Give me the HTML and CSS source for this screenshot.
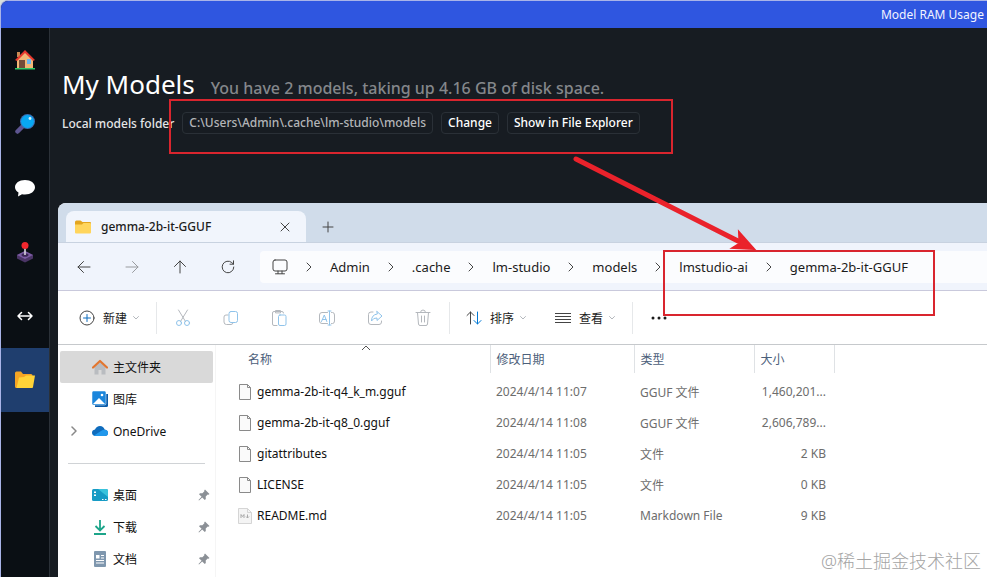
FILE: index.html
```html
<!DOCTYPE html>
<html lang="zh-CN">
<head>
<meta charset="utf-8">
<title>My Models</title>
<link rel="stylesheet" href="styles.css">
</head>
<body>
<div class="app">
  <header class="titlebar">Model RAM Usage</header>
  <div class="body">
    <nav class="rail" aria-label="Main">
      <button class="rail-btn" aria-label="Home"><svg width="20" height="20" viewBox="0 0 20 20"><path d="M2 2h3v5H2z" fill="#c98a54"/><path d="M2 9l8-7 8 7v9H2z" fill="#f3b877"/><path d="M0 10L10 0l10 10-2 1-8-8-8 8z" fill="#e8392f"/><path d="M4 10h6v8H4z" fill="#754b38"/><path d="M12 9h4v5h-4z" fill="#69b6ef"/><path d="M0 18h20v1.500H0z" fill="#2fc866"/></svg></button>
      <button class="rail-btn" aria-label="Search"><svg width="20" height="20" viewBox="0 0 20 20"><path d="M2.500 17.500L7.500 12.500" stroke="#5d5590" stroke-width="4.500" stroke-linecap="round"/><circle cx="12.500" cy="7.500" r="7.500" fill="#3b6fb4"/><circle cx="12.500" cy="7.500" r="6.400" fill="#08a8f2"/><circle cx="15" cy="4.500" r="1.400" fill="#d6f3ff"/></svg></button>
      <button class="rail-btn" aria-label="Chat"><svg width="22" height="18" viewBox="0 0 22 18"><path d="M11 1c5.800 0 10 3.200 10 7.300s-4.200 7.200-10 7.200c-1 0-2-.1-3-.3L4 17.500l.5-4C2.400 12.200 1 10.400 1 8.300 1 4.200 5.200 1 11 1z" fill="#fff"/></svg></button>
      <button class="rail-btn" aria-label="Playground"><svg width="18" height="22" viewBox="0 0 18 22"><path d="M1 14l8-4 8 4v3.500l-8 4-8-4z" fill="#4b3566"/><path d="M1 14l8-4 8 4-8 4z" fill="#7a5aa2"/><ellipse cx="9" cy="14" rx="3.500" ry="1.800" fill="#3b2755"/><path d="M9 6v8" stroke="#d8d4dc" stroke-width="1.600"/><circle cx="9" cy="4.500" r="3.500" fill="#f1272e"/></svg></button>
      <button class="rail-btn" aria-label="Server"><svg width="16" height="10" viewBox="0 0 16 10" class="line white"><path d="M1 5h14M4.500 1.500L1 5l3.500 3.500M11.500 1.500L15 5l-3.500 3.500"/></svg></button>
      <button class="rail-btn active" aria-label="My Models"><svg width="20" height="18" viewBox="0 0 20 18"><path d="M0 2q0-1.500 1.500-1.500H6L8 3h8q1.500 0 1.500 1.500V17H1.500Q0 17 0 15.500z" fill="#f5a524"/><path d="M4 6.500L9 6l2-1.500h9L18 16q-.3 1-1.300 1H1.500z" fill="#ffd338"/></svg></button>
    </nav>
    <main class="main">
      <section class="models">
        <div class="heading"><h1>My Models</h1><p>You have 2 models, taking up 4.16 GB of disk space.</p></div>
        <div class="folder-row">
          <span class="folder-label">Local models folder</span>
          <span class="chip path">C:\Users\Admin\.cache\lm-studio\models</span>
          <button class="chip">Change</button>
          <button class="chip">Show in File Explorer</button>
        </div>
      </section>

      <section class="explorer">
        <div class="tabs">
          <div class="tab">
            <svg width="16" height="14" viewBox="0 0 16 14"><path d="M0 2q0-1.500 1.500-1.500h4L7.500 2H15q1 0 1 1v3H0z" fill="#e3a51f"/><path d="M0 4.500h7L8.500 3H15q1 0 1 1v8.500q0 1-1 1H1q-1 0-1-1z" fill="#ffd55c"/></svg>
            <span>gemma-2b-it-GGUF</span>
            <button class="bare close" aria-label="Close"><svg width="10" height="10" viewBox="0 0 10 10" class="line"><path d="M1 1l8 8M9 1L1 9"/></svg></button>
          </div>
          <button class="bare new-tab" aria-label="New tab"><svg width="12" height="12" viewBox="0 0 12 12" class="line"><path d="M6 1v10M1 6h10"/></svg></button>
        </div>

        <div class="address">
          <button class="bare nav-btn" aria-label="Back"><svg width="14" height="14" viewBox="0 0 14 14" class="line"><path d="M13 7H1M6.500 1.500L1 7l5.500 5.500"/></svg></button>
          <button class="bare nav-btn faded" aria-label="Forward"><svg width="14" height="14" viewBox="0 0 14 14" class="line"><path d="M1 7h12M7.500 1.500L13 7l-5.500 5.500"/></svg></button>
          <button class="bare nav-btn" aria-label="Up"><svg width="14" height="14" viewBox="0 0 14 14" class="line"><path d="M7 13V1M1.500 6.500L7 1l5.500 5.500"/></svg></button>
          <button class="bare nav-btn" aria-label="Refresh"><svg width="14" height="14" viewBox="0 0 14 14" class="line"><path d="M12.800 7A5.800 5.800 0 1 1 10.800 2.600L12.500 4.200M12.500 .8v3.400H9"/></svg></button>
          <div class="crumbs">
            <svg width="16" height="16" viewBox="0 0 16 16" class="line"><rect x="1" y="1" width="14" height="11" rx="2"/><path d="M6 12v2.500M10 12v2.500M3.500 14.800h9"/></svg>
            <svg width="8" height="10" viewBox="0 0 8 10" class="line"><path d="M2 1l4 4-4 4"/></svg>
            <a href="#">Admin</a>
            <svg width="8" height="10" viewBox="0 0 8 10" class="line"><path d="M2 1l4 4-4 4"/></svg>
            <a href="#">.cache</a>
            <svg width="8" height="10" viewBox="0 0 8 10" class="line"><path d="M2 1l4 4-4 4"/></svg>
            <a href="#">lm-studio</a>
            <svg width="8" height="10" viewBox="0 0 8 10" class="line"><path d="M2 1l4 4-4 4"/></svg>
            <a href="#">models</a>
            <svg width="8" height="10" viewBox="0 0 8 10" class="line"><path d="M2 1l4 4-4 4"/></svg>
            <a href="#">lmstudio-ai</a>
            <svg width="8" height="10" viewBox="0 0 8 10" class="line"><path d="M2 1l4 4-4 4"/></svg>
            <a href="#">gemma-2b-it-GGUF</a>
          </div>
        </div>

        <div class="toolbar">
          <button class="bare cmd"><svg width="16" height="16" viewBox="0 0 16 16" class="line"><circle cx="8" cy="8" r="7"/><path d="M8 4.500v7M4.500 8h7" stroke="#0f6cbd"/></svg><span>新建</span><svg width="8" height="6" viewBox="0 0 8 6" class="line soft"><path d="M1.500 1.500L4 4l2.500-2.500"/></svg></button>
          <i class="sep"></i>
          <button class="bare tool" aria-label="Cut"><svg width="16" height="18" viewBox="0 0 16 18" class="line soft"><path d="M3.500 1l7 11.500M12.500 1l-7 11.500"/><g stroke="#8fc3ea"><circle cx="4" cy="14" r="2.500"/><circle cx="12" cy="14" r="2.500"/></g></svg></button>
          <button class="bare tool" aria-label="Copy"><svg width="16" height="16" viewBox="0 0 16 16" class="line soft"><path d="M5 5H3Q1 5 1 7v5q0 2.500 2.500 2.500H8q2 0 2-2"/><rect x="6" y="1.500" width="8.500" height="11" rx="2" stroke="#8fc3ea"/></svg></button>
          <button class="bare tool" aria-label="Paste"><svg width="16" height="18" viewBox="0 0 16 18" class="line soft"><path d="M6 16.500H3q-1.500 0-1.500-1.500V4Q1.500 2.500 3 2.500h8q1.500 0 1.500 1.500M4.500 3.500v-2h5v2z"/><rect x="7.500" y="6" width="7.500" height="10.500" rx="1.500" stroke="#8fc3ea"/></svg></button>
          <button class="bare tool" aria-label="Rename"><svg width="18" height="16" viewBox="0 0 18 16" class="line soft"><path d="M9.500 2.500H4Q1.500 2.500 1.500 5v6Q1.500 13.500 4 13.500h5.500M13.500 2.500h1Q16.500 2.500 16.500 5v6q0 2.500-2 2.500h-1"/><g stroke="#8fc3ea"><path d="M10 1h3M10 15h3M11.500 1v14M3.500 11.500L6.300 5l2.500 6.500M4.500 9.500h3.600"/></g></svg></button>
          <button class="bare tool" aria-label="Share"><svg width="16" height="16" viewBox="0 0 16 16" class="line soft"><path d="M6 2H4Q1.500 2 1.500 4.500v7.500Q1.500 14.500 4 14.500h8q2.500 0 2.500-2.500v-1"/><path d="M10 1.500l5 4.500-5 4.500V8Q6.500 7.500 4.500 11 4.500 4.800 10 4z" stroke="#8fc3ea"/></svg></button>
          <button class="bare tool" aria-label="Delete"><svg width="16" height="18" viewBox="0 0 16 18" class="line soft"><path d="M1 3.500h14M5.500 3.500q0-2.500 2.500-2.500t2.500 2.500M2.500 3.500L3.500 15q.2 1.500 1.500 1.500h6q1.300 0 1.500-1.500l1-11.500M6.500 7v6M9.500 7v6"/></svg></button>
          <i class="sep"></i>
          <button class="bare cmd"><svg width="16" height="14" viewBox="0 0 16 14" class="line"><path d="M4.500 13V1M1 4.500L4.500 1 8 4.500"/><path d="M11.500 1v12M8 9.500l3.500 3.500L15 9.500" stroke="#0078d4"/></svg><span>排序</span><svg width="8" height="6" viewBox="0 0 8 6" class="line soft"><path d="M1.500 1.500L4 4l2.500-2.500"/></svg></button>
          <button class="bare cmd"><svg width="16" height="12" viewBox="0 0 16 12" class="line"><path d="M0 1.500h16M0 4.500h16M0 7.500h16M0 10.500h16"/></svg><span>查看</span><svg width="8" height="6" viewBox="0 0 8 6" class="line soft"><path d="M1.500 1.500L4 4l2.500-2.500"/></svg></button>
          <i class="sep"></i>
          <button class="bare tool more" aria-label="More"><svg width="16" height="4" viewBox="0 0 16 4"><g fill="#1b1b1b"><circle cx="2" cy="2" r="1.500"/><circle cx="8" cy="2" r="1.500"/><circle cx="14" cy="2" r="1.500"/></g></svg></button>
        </div>

        <div class="content">
          <nav class="places" aria-label="Places">
            <a href="#" class="place selected"><i class="twist"></i><svg width="16" height="16" viewBox="0 0 16 16"><path d="M2.500 8L8 3l5.500 5v7.500h-4V11h-3v4.500h-4z" fill="#b9bcc0"/><path d="M1 8.500L8 2l7 6.500" fill="none" stroke="#e2762f" stroke-width="2.200" stroke-linecap="round" stroke-linejoin="round"/></svg><span>主文件夹</span></a>
            <a href="#" class="place"><i class="twist"></i><svg width="16" height="16" viewBox="0 0 16 16"><path d="M5 3h11v11.500q0 1.500-1.500 1.500H3v-3z" fill="#0b5ba8"/><rect width="14" height="14" rx="1.500" fill="#1b86dc" stroke="#fff" stroke-width=".5"/><path d="M1 13l6-6 6 6z" fill="#fff"/><circle cx="10" cy="4" r="1.300" fill="#fff"/></svg><span>图库</span></a>
            <a href="#" class="place"><i class="twist"><svg width="8" height="10" viewBox="0 0 8 10" class="line soft thick"><path d="M2 1l4 4-4 4"/></svg></i><svg width="16" height="16" viewBox="0 0 16 16"><path d="M3.500 13Q0 12.800 0 9.700 0 7 3 6.500 4.500 3 8 3t4.600 3.500Q16 7 16 10q0 3-3.300 3z" fill="#0f6cbd"/><path d="M2 12.500L9 8q2-1.500 4-1.300Q16 7.200 16 10q0 3-3.300 3H3.500z" fill="#2198ec"/></svg><span>OneDrive</span></a>
            <hr>
            <a href="#" class="place"><i class="twist"></i><svg width="16" height="14" viewBox="0 0 16 14"><rect y="1" width="16" height="12" rx="1.500" fill="#179bc5"/><path d="M6 1h8.500Q16 1 16 2.500V9z" fill="#39c3dc"/><path d="M2 3.500h2v1.500H2zM2 6.500h2V8H2zM10 11h1.500v1H10zM13 11h1.500v1H13z" fill="#fff"/></svg><span>桌面</span><svg class="pin" width="12" height="12" viewBox="0 0 12 12"><path d="M7 .5L11.500 5l-1 .8-.8-.2-2 2 .1 2.400-1 1-2.600-2.600L1 11.500.5 11l3.100-3.200L1 5.200l1-1 2.400.1 2-2-.2-.8z" fill="#8b9096"/></svg></a>
            <a href="#" class="place"><i class="twist"></i><svg width="16" height="16" viewBox="0 0 16 16"><path d="M8 1v10M3.500 7L8 11.500 12.500 7M2 15h12" fill="none" stroke="#1da58a" stroke-width="1.800"/></svg><span>下载</span><svg class="pin" width="12" height="12" viewBox="0 0 12 12"><path d="M7 .5L11.500 5l-1 .8-.8-.2-2 2 .1 2.400-1 1-2.600-2.600L1 11.500.5 11l3.100-3.200L1 5.200l1-1 2.400.1 2-2-.2-.8z" fill="#8b9096"/></svg></a>
            <a href="#" class="place"><i class="twist"></i><svg width="16" height="16" viewBox="0 0 16 16"><rect x="2" width="12" height="16" rx="1" fill="#7f97ae"/><path d="M4 4h3.500v3.500H4zM9 4h3v1H9zM9 6.500h3v1H9zM4 9h8v1H4zM4 11.500h8v1H4z" fill="#fff"/></svg><span>文档</span><svg class="pin" width="12" height="12" viewBox="0 0 12 12"><path d="M7 .5L11.500 5l-1 .8-.8-.2-2 2 .1 2.400-1 1-2.600-2.600L1 11.500.5 11l3.100-3.200L1 5.200l1-1 2.400.1 2-2-.2-.8z" fill="#8b9096"/></svg></a>
          </nav>
          <div class="files">
            <table>
              <colgroup><col class="c-name"><col class="c-date"><col class="c-type"><col class="c-size"></colgroup>
              <thead><tr><th>名称<svg class="sort" width="10" height="6" viewBox="0 0 10 6"><path d="M1 5l4-4 4 4" fill="none" stroke="#555"/></svg></th><th>修改日期</th><th>类型</th><th>大小</th></tr></thead>
              <tbody>
                <tr><td><div class="file"><svg width="14" height="16" viewBox="0 0 14 16" class="doc"><path d="M1.500.5h8l3 3v12h-11zM9.500.5v3h3"/></svg>gemma-2b-it-q4_k_m.gguf</div></td><td>2024/4/14 11:07</td><td>GGUF 文件</td><td>1,460,201...</td></tr>
                <tr><td><div class="file"><svg width="14" height="16" viewBox="0 0 14 16" class="doc"><path d="M1.500.5h8l3 3v12h-11zM9.500.5v3h3"/></svg>gemma-2b-it-q8_0.gguf</div></td><td>2024/4/14 11:08</td><td>GGUF 文件</td><td>2,606,789...</td></tr>
                <tr><td><div class="file"><svg width="14" height="16" viewBox="0 0 14 16" class="doc"><path d="M1.500.5h8l3 3v12h-11zM9.500.5v3h3"/></svg>gitattributes</div></td><td>2024/4/14 11:05</td><td>文件</td><td>2 KB</td></tr>
                <tr><td><div class="file"><svg width="14" height="16" viewBox="0 0 14 16" class="doc"><path d="M1.500.5h8l3 3v12h-11zM9.500.5v3h3"/></svg>LICENSE</div></td><td>2024/4/14 11:05</td><td>文件</td><td>0 KB</td></tr>
                <tr><td><div class="file"><svg width="14" height="16" viewBox="0 0 14 16"><path d="M.5.500h9l4 4v11H.500z" fill="#f4f4f4" stroke="#d5d5d5"/><path d="M9.500.500v4h4" fill="none" stroke="#d5d5d5"/><path d="M3 10V6.500l1.500 2 1.500-2V10M9.500 6.500V10M8 8.500L9.500 10 11 8.500" fill="none" stroke="#a9a9a9"/></svg>README.md</div></td><td>2024/4/14 11:05</td><td>Markdown File</td><td>9 KB</td></tr>
              </tbody>
            </table>
          </div>
        </div>
      </section>
    </main>
  </div>
  <svg class="marks" width="987" height="577" viewBox="0 0 987 577" aria-hidden="true"><rect x="170" y="100" width="502" height="53"/><rect x="664" y="251" width="270" height="64"/><path class="shaft" d="M576 159L738 241"/><path class="head" d="M754 249l-21.500-1 7-4.500-.5-11.500z"/></svg>
  <div class="watermark">@稀土掘金技术社区</div>
</div>
</body>
</html>
```

FILE: styles.css
```css
* { box-sizing: border-box; }
body {
  margin: 0;
  background: #d8e0dc;
  font-family: "Noto Sans", "Noto Sans CJK SC", sans-serif;
  font-size: 12px;
}
button { font: inherit; color: inherit; border: 0; padding: 0; background: none; }
a { color: inherit; text-decoration: none; }
svg { flex: none; display: block; }

.app {
  position: relative;
  display: flex;
  flex-direction: column;
  height: 100vh;
  overflow: hidden;
  border: solid #a9b4e8;
  border-width: 1px 0 0 1px;
  border-radius: 8px 0 0 0;
  background: #171c22;
}
.titlebar {
  flex: none;
  height: 27px;
  padding-right: 3px;
  background: #2f56e0;
  color: #f2f4ff;
  line-height: 27px;
  text-align: right;
}
.body { display: flex; flex: 1; min-height: 0; }
.rail {
  display: flex;
  flex-direction: column;
  flex: none;
  width: 49px;
  background: #0a0f14;
  border-right: 1px solid #2b3138;
}
.rail-btn { display: grid; place-items: center; height: 64px; }
.rail-btn.active { background: #1f3e6e; }

.main { display: flex; flex-direction: column; flex: 1; min-width: 0; }
.models { height: 175px; flex: none; padding: 36px 0 0 12px; color: #fff; }
.heading { display: flex; align-items: baseline; gap: 16px; }
h1 { margin: 0; font-size: 26px; font-weight: 400; line-height: 40px; }
.heading p { margin: 0; font-size: 16px; font-weight: 500; color: #84878b; }
.folder-row { display: flex; align-items: center; gap: 8px; margin-top: 8px; font-weight: 500; }
.folder-label { color: #e4e5e7; }
.chip { height: 22px; padding: 0 6px; border: 1px solid #2a3037; border-radius: 4px; line-height: 20px; }
.path { color: #b3b5b8; }

.explorer {
  display: flex;
  flex-direction: column;
  flex: 1;
  min-height: 0;
  margin-left: 8px;
  border-radius: 8px 0 0 0;
  background: #fff;
  color: #1b1b1b;
  overflow: hidden;
}
.line { fill: none; stroke: #444; stroke-linecap: round; stroke-linejoin: round; }
.line.white { stroke: #fff; stroke-width: 1.5; }
.line.soft { stroke: #b4b8bd; }
.line.thick { stroke: #888; stroke-width: 1.5; }
.bare { display: flex; align-items: center; justify-content: center; }

.tabs {
  display: flex;
  align-items: flex-end;
  height: 40px;
  flex: none;
  padding-left: 8px;
  background: #d0dcea;
  border-bottom: 1px solid #c8d2e0;
}
.tab {
  display: flex;
  align-items: center;
  gap: 10px;
  width: 240px;
  height: 31px;
  padding: 0 16px 0 9px;
  border-radius: 8px 8px 0 0;
  background: #f1f5fc;
  font-weight: 500;
}
.close { margin-left: auto; }
.new-tab { width: 44px; height: 31px; }
.address {
  display: flex;
  align-items: center;
  height: 48px;
  flex: none;
  padding-left: 2px;
  background: #f0f4fc;
  border-bottom: 1px solid #c9c9dc;
}
.nav-btn { width: 48px; height: 32px; }
.faded { opacity: .5; }
.crumbs {
  display: flex;
  align-items: center;
  gap: 17px;
  flex: 1;
  height: 32px;
  margin-left: 8px;
  padding-left: 12px;
  border-radius: 4px 0 0 4px;
  background: #fbfcfe;
  font-size: 13px;
  white-space: nowrap;
}
.toolbar {
  display: flex;
  align-items: center;
  height: 54px;
  flex: none;
  padding-left: 7px;
  border-bottom: 1px solid #c6c9cc;
}
.cmd { height: 32px; padding: 0 14px; gap: 5px; white-space: nowrap; }
.cmd span { margin-left: 3px; }
.tool { width: 48px; height: 32px; }
.sep { width: 1px; height: 32px; margin: 0 2px; background: #e6e8ea; }

.content { display: flex; flex: 1; min-height: 0; }
.places { width: 158px; flex: none; padding: 6px 2px 0; border-right: 1px solid #f5f5f5; overflow: hidden; }
.place { display: flex; align-items: center; gap: 5px; height: 32px; color: #111; border-radius: 2px; }
.selected { background: #d9d9d9; }
.twist { display: grid; place-items: center; width: 27px; }
.pin { margin: 0 3px 0 auto; }
.places hr { height: 1px; margin: 16px 8px 15px; border: 0; background: #d0d3d6; }

.files { flex: 1; min-width: 0; padding-left: 16px; }
table { table-layout: fixed; width: 602px; border-collapse: collapse; white-space: nowrap; }
.c-name { width: 258px; }
.c-date { width: 144px; }
.c-type { width: 120px; }
.c-size { width: 80px; }
th {
  position: relative;
  height: 28px;
  padding: 0 0 0 6px;
  border-right: 1px solid #dfe2e5;
  color: #4c607a;
  font-weight: 400;
  text-align: left;
}
th:first-child { padding-left: 16px; }
.sort { position: absolute; left: 50%; top: 0; }
tbody::before { content: ""; display: block; height: 3px; }
td { height: 31px; padding: 0 0 0 6px; color: #6d6d6d; }
td:first-child { color: #111; }
td:last-child { padding-right: 8px; text-align: right; }
.file { display: flex; align-items: center; gap: 5px; }
.doc { fill: #fafafa; stroke: #8a8a8a; }

.marks { position: absolute; left: -1px; top: -1px; pointer-events: none; }
.marks rect { fill: none; stroke: #d9252e; stroke-width: 2; }
.shaft { fill: none; stroke: #ea222b; stroke-width: 5; stroke-linecap: round; }
.head { fill: #ea222b; stroke: #ea222b; stroke-width: 2; }
.watermark { position: absolute; right: 6px; bottom: 4px; color: #a4a4a4; font-size: 18px; line-height: 24px; font-weight: 300; }
```
